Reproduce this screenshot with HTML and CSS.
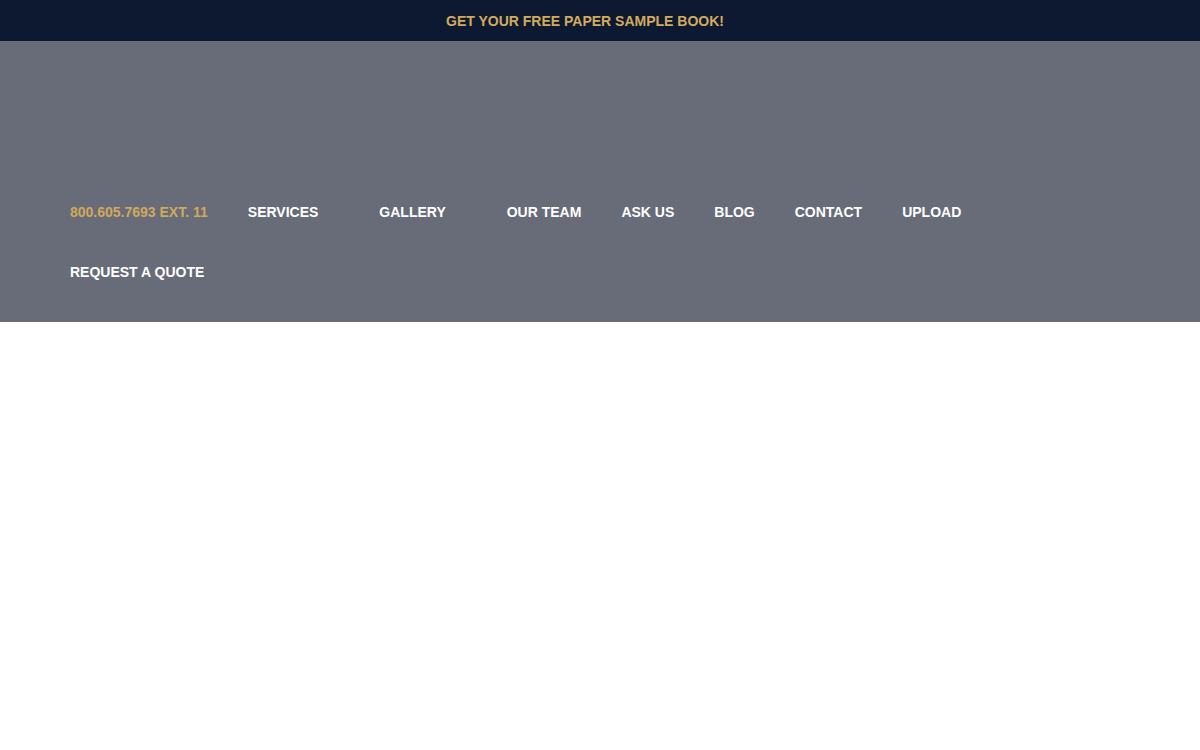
FILE: index.html
```html
<!DOCTYPE html>
<html lang="en">
<head>
<meta charset="utf-8">
<title>Header</title>
<link rel="stylesheet" href="styles.css">
</head>
<body>
<div class="promo"><a href="#" class="promo-link">GET YOUR FREE PAPER SAMPLE BOOK!</a></div>
<header class="header">
  <nav class="nav">
    <a href="#" class="nav-item phone">800.605.7693 EXT. 11</a>
    <a href="#" class="nav-item has-sub">SERVICES</a>
    <a href="#" class="nav-item has-sub">GALLERY</a>
    <a href="#" class="nav-item">OUR TEAM</a>
    <a href="#" class="nav-item">ASK US</a>
    <a href="#" class="nav-item">BLOG</a>
    <a href="#" class="nav-item">CONTACT</a>
    <a href="#" class="nav-item">UPLOAD</a>
    <a href="#" class="nav-item">REQUEST A QUOTE</a>
  </nav>
</header>
<main class="content"></main>
</body>
</html>
```

FILE: styles.css
```css
* { box-sizing: border-box; }
html, body { margin: 0; padding: 0; background: #ffffff; }
body { font-family: "Liberation Sans", Arial, sans-serif; }

.promo {
  height: 41px;
  background: #0c1930;
  display: flex;
  align-items: center;
  justify-content: center;
  padding-right: 30px;
}
.promo-link {
  color: #d2ab5f;
  font-size: 14px;
  font-weight: 700;
  text-decoration: none;
}

.header {
  background: #686c79;
  height: 281px;
  padding: 141px 70px 20px 70px;
}
.nav {
  display: flex;
  flex-wrap: wrap;
  column-gap: 40px;
  max-width: 1050px;
}
.nav-item {
  height: 60px;
  display: flex;
  align-items: center;
  color: #ffffff;
  font-size: 14px;
  font-weight: 700;
  text-decoration: none;
}
.nav-item.phone { color: #d0a95d; }
.nav-item.has-sub { padding-right: 21px; }
```
